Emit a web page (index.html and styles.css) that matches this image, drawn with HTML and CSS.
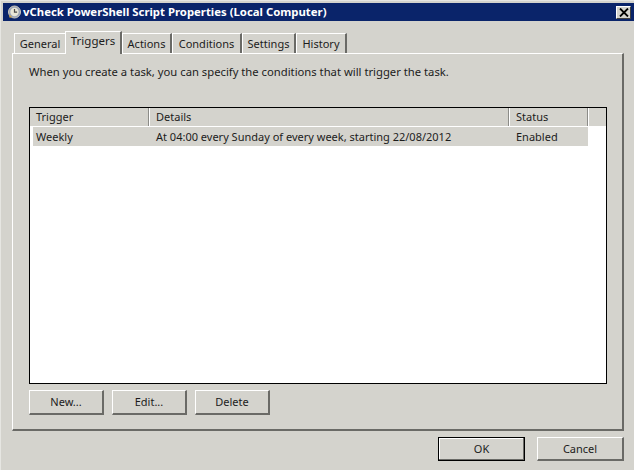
FILE: index.html
```html
<!DOCTYPE html>
<html lang="en">
<head>
<meta charset="utf-8">
<title>vCheck PowerShell Script Properties (Local Computer)</title>
<link rel="stylesheet" href="styles.css">
</head>
<body>
<div class="window">
  <header class="titlebar">
    <svg class="app-icon" width="16" height="16" viewBox="0 0 16 16">
      <circle cx="7.5" cy="8" r="6" fill="#9aa3b8" stroke="#cfcabb"/>
      <circle cx="7.5" cy="8" r="4.2" fill="#e9e6d6"/>
      <path d="M7.5 5v3.2h2.6" fill="none" stroke="#4b4b4b" stroke-width="1.2"/>
      <path d="M1.8 11.5a2 2 0 0 1 3 1.5l-2 1z" fill="#c9a24a"/>
    </svg>
    <span class="title">vCheck PowerShell Script Properties (Local Computer)</span>
    <button class="close" aria-label="Close">
      <svg width="10" height="9" viewBox="0 0 10 9"><path d="M1 0.5l8 8M9 0.5l-8 8" stroke="#000" stroke-width="1.8"/></svg>
    </button>
  </header>
  <nav class="tabs">
    <span class="tab tab-general">General</span>
    <span class="tab tab-active">Triggers</span>
    <span class="tab tab-actions">Actions</span>
    <span class="tab tab-conditions">Conditions</span>
    <span class="tab tab-settings">Settings</span>
    <span class="tab tab-history">History</span>
  </nav>
  <section class="panel">
    <p class="intro">When you create a task, you can specify the conditions that will trigger the task.</p>
    <div class="list">
      <div class="list-head">
        <span class="col col-trigger">Trigger</span>
        <span class="col col-details">Details</span>
        <span class="col col-status">Status</span>
        <span class="col col-fill"></span>
      </div>
      <div class="list-row">
        <span class="cell cell-trigger">Weekly</span>
        <span class="cell cell-details">At 04:00 every Sunday of every week, starting 22/08/2012</span>
        <span class="cell cell-status">Enabled</span>
      </div>
    </div>
    <div class="panel-actions">
      <button class="btn btn-small">New...</button>
      <button class="btn btn-small">Edit...</button>
      <button class="btn btn-small">Delete</button>
    </div>
  </section>
  <footer class="dialog-actions">
    <button class="btn btn-large btn-default">OK</button>
    <button class="btn btn-large">Cancel</button>
  </footer>
</div>
</body>
</html>
```
FILE: styles.css
```css
* { box-sizing: border-box; }
html, body { margin: 0; padding: 0; }
body {
  width: 634px;
  height: 470px;
  overflow: hidden;
  background: #d4d3cd;
  font-family: "Noto Sans", "DejaVu Sans", sans-serif;
  font-size: 11px;
  color: #1c1c1c;
}
.window {
  width: 634px;
  height: 470px;
  padding: 3px 0 0 3px;
  border-top: 1px solid #e6e6e2;
  border-left: 1px solid #e6e6e2;
  background: #d4d3cd;
  display: flex;
  flex-direction: column;
}
.titlebar {
  height: 18px;
  margin-top: -1px;
  margin-left: -1px;
  flex: none;
  display: flex;
  align-items: center;
  background: #0a246a;
  color: #fff;
  padding: 0 3px 0 4px;
}
.app-icon { flex: none; }
.title {
  font-weight: 700;
  font-size: 11.35px;
  padding-bottom: 1px;
  white-space: nowrap;
  flex: 1;
}
.close {
  flex: none;
  width: 15px;
  height: 13px;
  padding: 0;
  display: flex;
  align-items: center;
  justify-content: center;
  background: #d4d3cd;
  border: 1px solid;
  border-color: #fff #404040 #404040 #fff;
}
.tabs {
  flex: none;
  display: flex;
  align-items: flex-end;
  height: 32px;
  padding-left: 10px;
}
.tab {
  height: 20px;
  display: flex;
  align-items: center;
  justify-content: center;
  border-top: 1px solid #fff;
  border-left: 1px solid #fff;
  border-right: 2px solid #6a6a66;
  font-size: 11px;
  white-space: nowrap;
}
.tab-general { width: 51px; border-right: 0; }
.tab-active {
  width: 57px;
  height: 23px;
  margin-bottom: -1px;
  padding-bottom: 5px;
  position: relative;
  z-index: 1;
  background: #d4d3cd;
  font-size: 11.5px;
}
.tab-actions { width: 50px; }
.tab-conditions { width: 70px; }
.tab-settings { width: 54px; }
.tab-history { width: 51px; }
.panel {
  flex: none;
  width: 612px;
  height: 378px;
  margin-left: 8px;
  border-top: 1px solid #fff;
  border-left: 1px solid #fff;
  border-right: 2px solid #6a6a66;
  border-bottom: 2px solid #6a6a66;
  padding: 0 15px 0 16px;
  display: flex;
  flex-direction: column;
}
.intro {
  margin: 9px 0 0;
  height: 18px;
  line-height: 18px;
  font-size: 11.25px;
  white-space: nowrap;
}
.list {
  margin-top: 26px;
  height: 277px;
  flex: none;
  border: 1px solid #000;
  background: #fff;
  display: flex;
  flex-direction: column;
}
.list-head {
  flex: none;
  height: 19px;
  display: flex;
  background: #d4d3cd;
  border-bottom: 1px solid #fff;
}
.col {
  height: 18px;
  padding-left: 6px;
  line-height: 18px;
  font-size: 11px;
  border-right: 1px solid #8c8c88;
  box-shadow: 1px 0 0 #fff;
  margin-right: 1px;
}
.col-trigger { width: 119px; }
.col-details { width: 359px; }
.col-status { width: 78px; }
.col-fill { flex: 1; border-right: 0; box-shadow: none; margin-right: 0; }
.list-row {
  flex: none;
  width: 555px;
  height: 19px;
  margin-left: 3px;
  display: flex;
  align-items: center;
  background: #d4d3cd;
  font-size: 11px;
  white-space: nowrap;
}
.cell-trigger { width: 123px; padding-left: 3px; }
.cell-details { width: 360px; }
.cell-status { flex: 1; }
.panel-actions {
  display: flex;
  gap: 8px;
  margin-top: 6px;
}
.btn {
  font-family: inherit;
  font-size: 11px;
  color: #1c1c1c;
  background: #d4d3cd;
  padding: 0 0 1px;
  border: 1px solid;
  border-color: #fff #6a6a66 #6a6a66 #fff;
  border-right-width: 2px;
  border-bottom-width: 2px;
}
.btn-small { width: 75px; height: 25px; }
.btn-large { width: 87px; height: 24px; }
.btn-default {
  border: 1px solid #000;
  box-shadow: inset -1px -1px 0 #6a6a66, inset 1px 1px 0 #fff;
}
.dialog-actions {
  flex: none;
  display: flex;
  justify-content: flex-end;
  gap: 12px;
  margin-top: 6px;
  padding-right: 10px;
}
```
